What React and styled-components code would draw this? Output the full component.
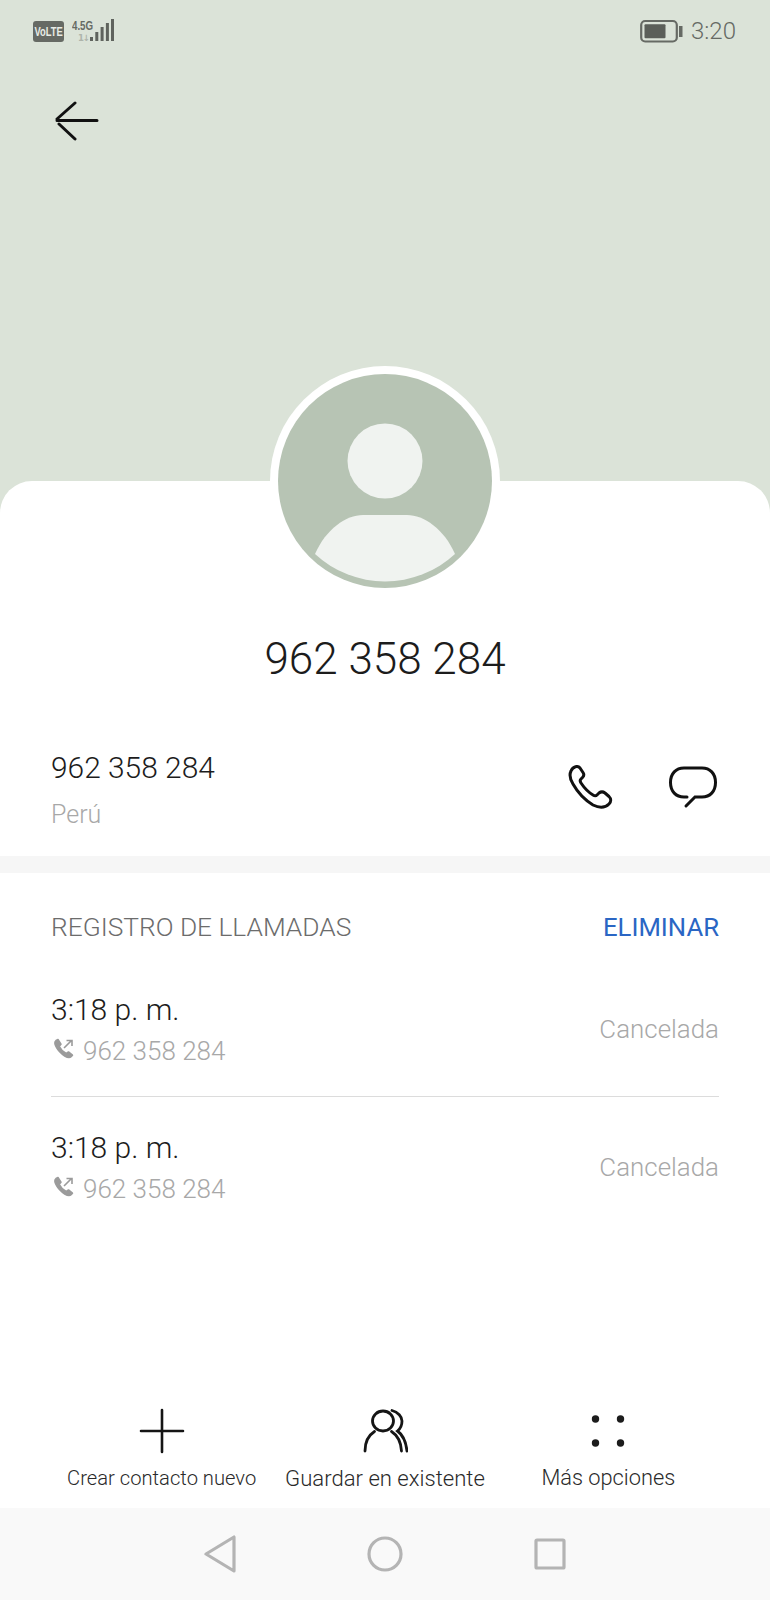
import React from 'react';
import styled, { createGlobalStyle } from 'styled-components';

const GlobalStyle = createGlobalStyle`
  html, body {
    margin: 0;
    padding: 0;
    background: #fff;
    font-family: Roboto, "Noto Sans", sans-serif;
  }
  * { box-sizing: border-box; }
`;

const Page = styled.div`
  width: 770px;
  height: 1600px;
  display: flex;
  flex-direction: column;
  background: #dbe3d8;
  overflow: hidden;
`;

const Header = styled.header`
  height: 481px;
  flex: none;
  padding: 19px 34px 0 33px;
`;

const StatusBar = styled.div`
  display: flex;
  justify-content: space-between;
  align-items: center;
  height: 24px;
  color: #666a64;
`;

const StatusGroup = styled.div`
  display: flex;
  align-items: center;
`;

const Volte = styled.span`
  width: 31px;
  height: 21px;
  border-radius: 3px;
  background: #666a64;
  color: #e8ece6;
  display: flex;
  align-items: center;
  justify-content: center;
  font: 700 13px/21px "Liberation Sans", sans-serif;
`;

const VolteText = styled.span`
  display: block;
  transform: scaleX(0.72);
`;

const Network = styled.span`
  display: flex;
  flex-direction: column;
  align-items: flex-end;
  width: 18px;
  height: 24px;
  margin-left: 8px;
`;

const NetworkType = styled.span`
  align-self: flex-start;
  font: 700 13.5px/13px "Liberation Sans", sans-serif;
  transform: scaleX(0.72);
  transform-origin: left center;
  white-space: nowrap;
`;

const NetworkSpeed = styled.span`
  margin: 1px 1px 0 0;
  font: 700 8.5px/10px "DejaVu Sans", sans-serif;
  letter-spacing: -1px;
  color: #aeb4ab;
  white-space: nowrap;
`;

const Clock = styled.span`
  margin-left: 8px;
  font-size: 24px;
  font-weight: 300;
  line-height: 24px;
`;

const BackButton = styled.button`
  display: block;
  width: 44px;
  height: 40px;
  margin: 58px 0 0 22px;
  padding: 0;
  border: 0;
  background: none;
`;

const Card = styled.main`
  flex: 1;
  display: flex;
  flex-direction: column;
  background: #fff;
  border-radius: 32px 32px 0 0;
`;

const AvatarRing = styled.div`
  width: 230px;
  height: 230px;
  flex: none;
  margin: -115px auto 0;
  padding: 8px;
  border-radius: 50%;
  background: #fff;
`;

const Title = styled.h1`
  margin: 35px 0 0;
  font-size: 44px;
  font-weight: 300;
  line-height: 56px;
  color: #1c1c1c;
  text-align: center;
`;

const NumberRow = styled.section`
  display: flex;
  justify-content: space-between;
  align-items: flex-start;
  height: 186px;
  padding: 62px 53px 0 51px;
  border-bottom: 17px solid #f6f6f6;
`;

const NumberText = styled.div`
  font-size: 29.9px;
  font-weight: 300;
  line-height: 38px;
  color: #1c1c1c;
`;

const Country = styled.div`
  margin-top: 10px;
  font-size: 25px;
  font-weight: 300;
  line-height: 36px;
  color: #a8a8a8;
`;

const RowActions = styled.div`
  display: flex;
  gap: 55px;
  padding-top: 16px;
`;

const LogSection = styled.section`
  padding: 0 51px;
  flex: 1;
`;

const LogHeader = styled.div`
  display: flex;
  justify-content: space-between;
  align-items: center;
  height: 87px;
  padding-top: 20px;
  font-size: 26.3px;
  font-weight: 300;
  color: #6c6c6c;
`;

const DeleteLink = styled.span`
  font-size: 25.7px;
  font-weight: 400;
  color: #2a66c4;
`;

const LogRow = styled.div`
  display: flex;
  justify-content: space-between;
  align-items: center;
  height: 137px;
  padding-top: 3px;
  border-bottom: ${(p) => (p.$last ? '0' : '1px solid #dcdcdc')};
`;

const LogInfo = styled.div`
  padding-top: 1px;
`;

const LogTime = styled.div`
  font-size: 30px;
  font-weight: 300;
  line-height: 38px;
  color: #1c1c1c;
`;

const LogDetail = styled.div`
  display: flex;
  align-items: center;
  gap: 7px;
  margin: 4px 0 0 1px;
  font-size: 26px;
  font-weight: 300;
  line-height: 36px;
  color: #a8a8a8;
`;

const LogStatus = styled.div`
  margin-top: -1px;
  font-size: 25.9px;
  font-weight: 300;
  color: #a8a8a8;
`;

const ActionBar = styled.nav`
  display: grid;
  grid-template-columns: repeat(3, 1fr);
  height: 130px;
  padding: 28px 50px 0;
`;

const ActionItem = styled.div`
  display: flex;
  flex-direction: column;
  align-items: center;
  color: #2a2a2a;
`;

const ActionIcon = styled.div`
  height: 50px;
  display: flex;
  align-items: center;
  justify-content: center;
`;

const ActionLabel = styled.span`
  margin-top: 7px;
  font-size: ${(p) => p.$size}px;
  font-weight: 300;
  line-height: 30px;
  white-space: nowrap;
`;

const SystemNav = styled.nav`
  display: flex;
  align-items: center;
  justify-content: center;
  gap: 130px;
  height: 92px;
  flex: none;
  background: #f9f9f9;
`;

const calls = [1, 2];

const OutgoingCallIcon = () => (
  <svg width="24" height="24" viewBox="0 0 24 24" fill="none" stroke="#9b9b9b" style={{ marginTop: -4 }}>
    <path d="M4 3.500c-1.600 1.300-1.400 3.600 0 6.200 2 3.800 5 7 8.700 9.300 2.500 1.500 5 2 6.400.7l1.400-1.500-4-3.300-2.300 1.500c-2.500-1.200-5.700-4.300-7-7L9 7.200 6 2.500z" fill="#9b9b9b" strokeWidth="1.500" strokeLinejoin="round" />
    <path d="M12 11l7-7M14.500 3.500H20V9" strokeWidth="1.600" />
  </svg>
);

function App() {
  return (
    <Page>
      <GlobalStyle />
      <Header>
        <StatusBar>
          <StatusGroup>
            <Volte>
              <VolteText>VoLTE</VolteText>
            </Volte>
            <Network>
              <NetworkType>4.5G</NetworkType>
              <NetworkSpeed>1↓</NetworkSpeed>
            </Network>
            <svg width="25" height="24" viewBox="0 0 25 24" fill="#5f635d">
              <rect x="0" y="18" width="3" height="4" />
              <rect x="5.300" y="13" width="3" height="9" />
              <rect x="10.600" y="8" width="3" height="14" />
              <rect x="15.900" y="4" width="3" height="18" />
              <rect x="21" y="0" width="3" height="22" />
            </svg>
          </StatusGroup>
          <StatusGroup>
            <svg width="43" height="24" viewBox="0 0 43 24" fill="none">
              <rect x="1.200" y="2" width="35.600" height="20.500" rx="4" stroke="#666a64" strokeWidth="2.200" />
              <rect x="4.500" y="5.200" width="21" height="14" rx="1" fill="#5b5f59" />
              <rect x="39" y="7" width="3.500" height="11" fill="#666a64" />
            </svg>
            <Clock>3:20</Clock>
          </StatusGroup>
        </StatusBar>
        <BackButton aria-label="Volver">
          <svg width="44" height="40" viewBox="0 0 44 40" fill="none" stroke="#111" strokeLinecap="round" strokeWidth="3">
            <path d="M2 19.500h40M20 2L2 18M4 23l16 15" />
          </svg>
        </BackButton>
      </Header>
      <Card>
        <AvatarRing>
          <svg width="214" height="214" viewBox="0 0 214 214">
            <circle cx="107" cy="107" r="107" fill="#b7c4b4" />
            <circle cx="107" cy="87" r="37.500" fill="#f0f3f0" />
            <path d="M37 180C48 155 68 141 85 141H129C146 141 166 155 177 180A103 103 0 0 1 37 180Z" fill="#f0f3f0" />
          </svg>
        </AvatarRing>
        <Title>962 358 284</Title>
        <NumberRow>
          <div>
            <NumberText>962 358 284</NumberText>
            <Country>Perú</Country>
          </div>
          <RowActions>
            <svg width="46" height="44" viewBox="0 0 46 44" fill="none" stroke="#111" strokeWidth="3" strokeLinejoin="round">
              <path d="M3 6C1 10 2 14 5 19C10 28 17 35 25 40C31 43 37 43 41 39C43.500 36.500 43 33.500 41 31.500L37 28C35 26.500 33 26.500 31 28L29 30C28 31 26.500 31 25 30C20 27 16 22.500 13 18C12 16.500 12 15 13 14L14.500 12.500C16 11 16 9 15 7.500L12 3C10 .5 5 1 3 6Z" />
            </svg>
            <svg width="48" height="44" viewBox="0 0 48 44" fill="none" stroke="#111" strokeWidth="3" strokeLinecap="round">
              <path d="M18 32H15C7 32 1.500 26.500 1.500 17.500C1.500 8.500 7 3 15 3H33C41 3 46.500 8.500 46.500 17.500C46.500 26.500 41 32 33 32H26L17 41" />
            </svg>
          </RowActions>
        </NumberRow>
        <LogSection>
          <LogHeader>
            <span>REGISTRO DE LLAMADAS</span>
            <DeleteLink>ELIMINAR</DeleteLink>
          </LogHeader>
          {calls.map((id, i) => (
            <LogRow key={id} $last={i === calls.length - 1}>
              <LogInfo>
                <LogTime>3:18 p. m.</LogTime>
                <LogDetail>
                  <OutgoingCallIcon />
                  962 358 284
                </LogDetail>
              </LogInfo>
              <LogStatus>Cancelada</LogStatus>
            </LogRow>
          ))}
        </LogSection>
        <ActionBar>
          <ActionItem>
            <ActionIcon>
              <svg width="46" height="46" viewBox="0 0 46 46" stroke="#151515" strokeWidth="2.600" strokeLinecap="round">
                <path d="M23 2v42M2 23h42" />
              </svg>
            </ActionIcon>
            <ActionLabel $size={20.2}>Crear contacto nuevo</ActionLabel>
          </ActionItem>
          <ActionItem>
            <ActionIcon>
              <svg width="46" height="44" viewBox="0 0 46 44" fill="none" stroke="#151515" strokeWidth="2.800" strokeLinecap="round">
                <ellipse cx="21" cy="12" rx="10.500" ry="10" />
                <path d="M3 42C3 33 7 26 12.500 22.500M29.500 22.500C35 26 39 33 39.500 42M30 1.500C36 3 40 8 40 12C40 16 38 20 35.500 22C41 26 44 33 45 42" />
              </svg>
            </ActionIcon>
            <ActionLabel $size={22.1}>Guardar en existente</ActionLabel>
          </ActionItem>
          <ActionItem>
            <ActionIcon>
              <svg width="36" height="34" viewBox="0 0 36 34" fill="#1c1c1c">
                <circle cx="5.500" cy="5" r="3.700" />
                <circle cx="30.500" cy="5" r="3.700" />
                <circle cx="5.500" cy="29" r="3.700" />
                <circle cx="30.500" cy="29" r="3.700" />
              </svg>
            </ActionIcon>
            <ActionLabel $size={21.8}>Más opciones</ActionLabel>
          </ActionItem>
        </ActionBar>
        <SystemNav>
          <svg width="34" height="38" viewBox="0 0 34 38" fill="none" stroke="#b4b4b4" strokeWidth="3.200" strokeLinejoin="round">
            <path d="M31 2V36L3 19Z" />
          </svg>
          <svg width="36" height="36" viewBox="0 0 36 36" fill="none" stroke="#b4b4b4" strokeWidth="3.200">
            <circle cx="18" cy="18" r="16" />
          </svg>
          <svg width="34" height="34" viewBox="0 0 34 34" fill="none" stroke="#b4b4b4" strokeWidth="3.200" strokeLinejoin="round">
            <rect x="3" y="3" width="28" height="28" rx="1" />
          </svg>
        </SystemNav>
      </Card>
    </Page>
  );
}

export default App;
